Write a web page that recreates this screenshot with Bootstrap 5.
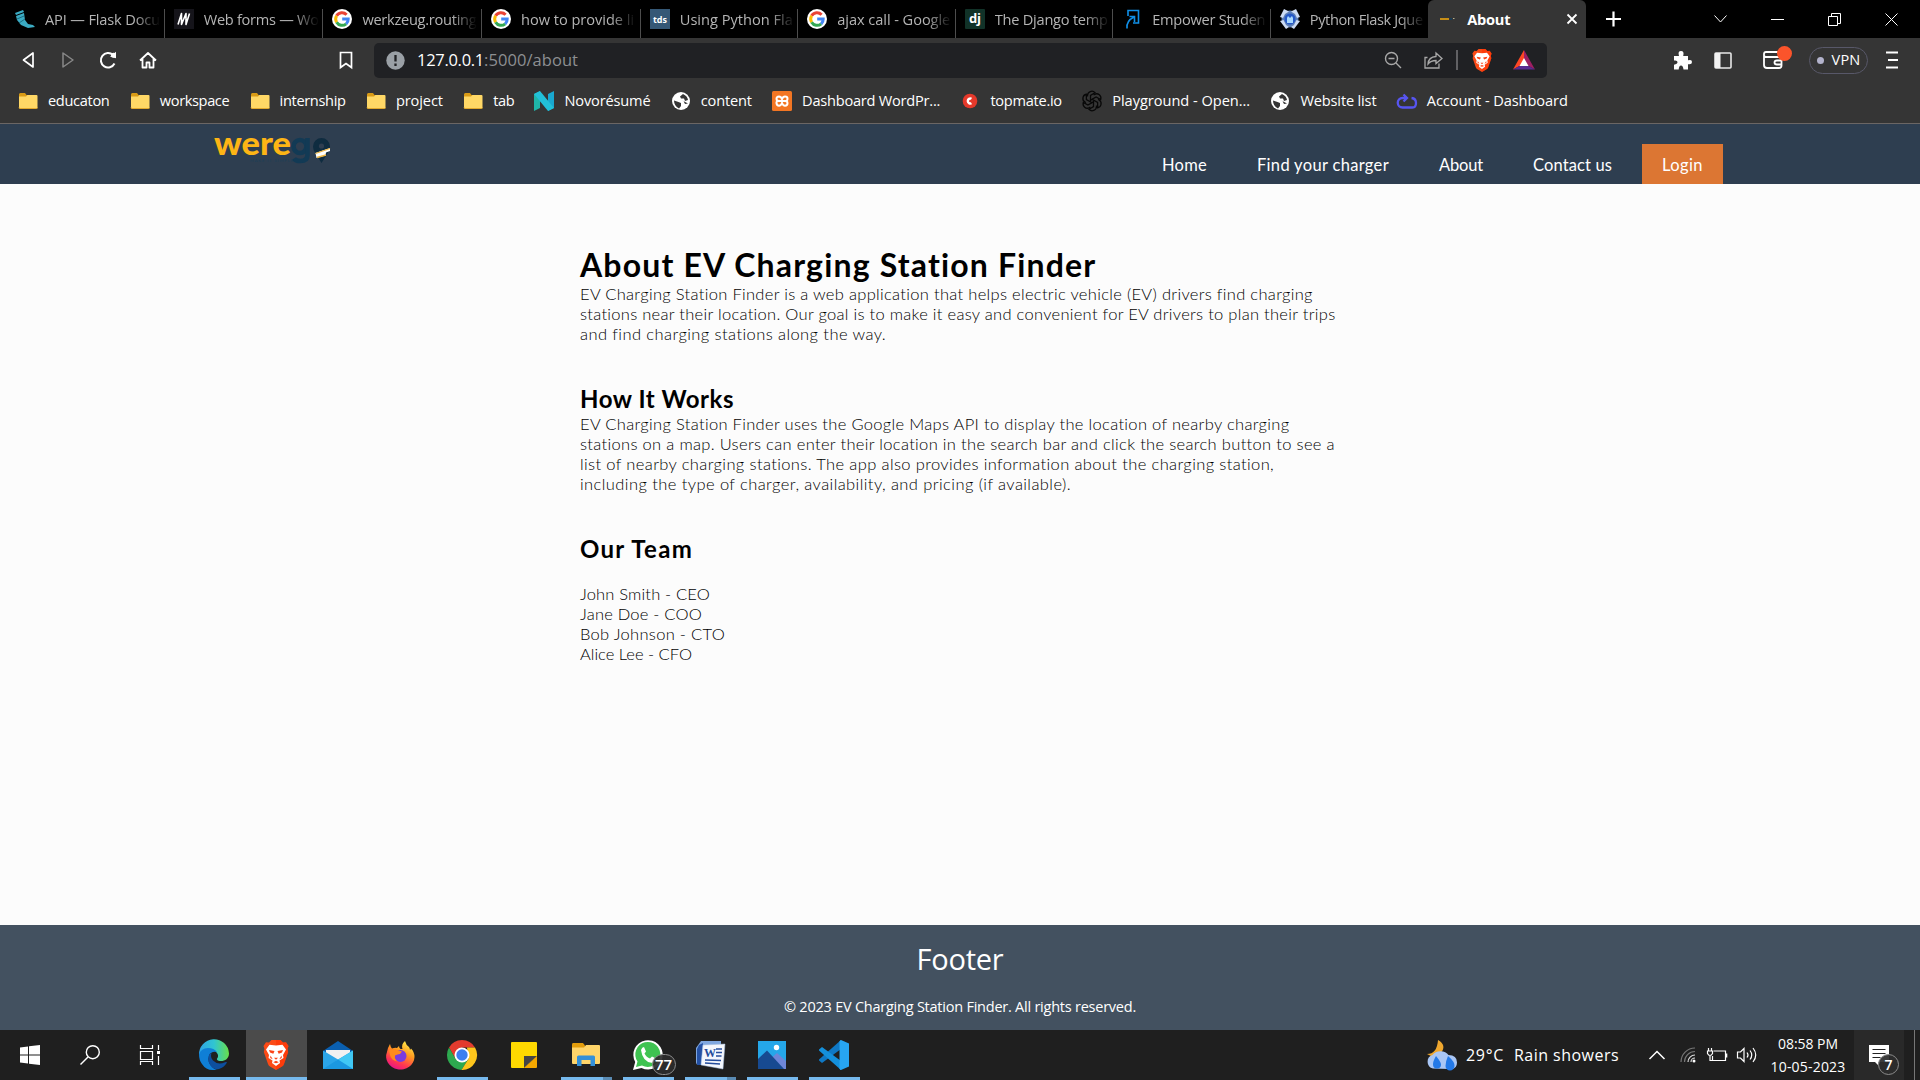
<!DOCTYPE html>
<html lang="en">
<head>
<meta charset="utf-8">
<meta name="viewport" content="width=device-width, initial-scale=1">
<title>About</title>
<link href="https://cdn.jsdelivr.net/npm/bootstrap@5.3.0/dist/css/bootstrap.min.css" rel="stylesheet">
<style>
  html, body { height: 100%; }
  body { font-family: "Open Sans", "Noto Sans", sans-serif; background: #fcfcfc; color: #000; overflow: hidden; line-height: 20px; }
  svg { display: block; flex: none; overflow: visible; }
  [data-w] { display: inline-block; white-space: nowrap; }

  /* browser chrome */
  .tabstrip { height: 38px; background: #000; font-size: 14.6px; color: #b4b4b4; }
  .tabstrip > .lead-gap { width: 6px; flex: none; }
  .btab { width: 157.500px; height: 38px; padding: 0 0 0 9px; gap: 10px; flex: none; }
  .btab.wide { width: 158.700px; }
  .btab.sep { background: linear-gradient(#4d4d4d, #4d4d4d) 100% 9px / 1px 29px no-repeat; }
  .btab .ttl { width: 115px; overflow: hidden; -webkit-mask-image: linear-gradient(90deg, #000 78%, transparent 100%); mask-image: linear-gradient(90deg, #000 78%, transparent 100%); }
  .btab.current { width: 158px; background: #353535; border-radius: 6px 6px 0 0; color: #fff; font-weight: 700; }
  .btab svg + .ttl, .btab svg + span { margin-top: -1px; }
  .winctl { gap: 44px; padding-right: 22.500px; }
  .toolbar { height: 44px; background: #353535; }
  .navicons { width: 374px; padding: 0 21px 0 22px; }
  .urlbar { width: 1173px; height: 35px; border-radius: 5px; background: #202124; padding: 0 12px; font-size: 16.500px; color: #8d8f92; }
  .ico-fwd { margin-left: 26.500px; }
  .ico-reload { margin-left: 24px; }
  .ico-home { margin-left: 22px; }
  .ico-share { margin-left: 22px; }
  .ico-bar { margin-left: 13px; }
  .ico-lion { margin-left: 14px; }
  .ico-bat { margin-left: 21px; }
  .tools { padding-right: 22px; }
  .tools .side { margin-left: 22px; }
  .tools .wallet { margin-left: 31px; }
  .tools .burger { margin-left: 18px; }
  .vpn { width: 59px; height: 27px; border: 1px solid #585869; border-radius: 14px; color: #fff; font-size: 14.500px; gap: 8px; margin-left: 26px; }
  .vpn i { width: 7px; height: 7px; border-radius: 50%; background: #b3b3cc; }
  .wallet-dot { position: absolute; width: 15px; height: 15px; right: -9px; top: -5px; border-radius: 50%; background: #fb542b; }
  .bookmarks { height: 42px; background: #353535; border-bottom: 1px solid #6b6664; font-size: 14.6px; color: #fff; padding: 0 0 3px 18px; gap: 20.300px; }
  .bookmarks > div { gap: 10px; }
  .bookmarks span { margin-top: -2px; }

  /* page */
  .sitehead { height: 60px; background: #2e3e50; padding: 0 197px 0 214px; }
  .sitenav { font-family: Lato, sans-serif; font-size: 16.5px; color: #fff; gap: 50px; }
  .sitenav a { color: #fff; text-decoration: none; line-height: 40px; height: 40px; padding-top: 1px; }
  .sitenav .login { background: #dc7633; width: 81px; margin-left: -20px; text-align: center; }
  .about { width: 760px; margin-left: 580px; height: 741px; padding-top: 61px; font-family: Lato, sans-serif; font-weight: 300; font-size: 16.5px; color: #000; }
  .about h1 { font-size: 32px; font-weight: 700; line-height: 39px; margin: 0; color: #000; }
  .about h2 { font-size: 24px; font-weight: 700; line-height: 30px; margin: 0; color: #000; }
  .about p { margin: 0; }
  .about section + section { margin-top: 40px; }
  .about ul { padding-top: 20px; }
  .sitefoot { height: 105px; background: #435160; color: #fff; }
  .sitefoot h3 { font-size: 29px; line-height: 34px; font-weight: 400; padding-top: 17px; margin: 0; }
  .sitefoot p { font-size: 14.5px; margin: 21px 0 0; }

  /* taskbar */
  .taskbar { height: 50px; background: #1f1f1f; color: #fff; }
  .sys { width: 60px; height: 50px; }
  .sys-end { width: 3px; }
  .app { width: 51px; height: 50px; margin: 0 5.5px; border-bottom: 3px solid #76b9ed; padding-top: 3px; position: relative; }
  .app.idle { border-color: transparent; }
  .app.front { width: 61px; margin: 0 .5px; background: #4b4b4b; }
  .app.multi { border-image: linear-gradient(90deg, #76b9ed 79%, #5a8bb3 79%) 3; }
  .count { position: absolute; border: 1px solid #8b8b8b; border-radius: 12px; background: rgba(45,45,45,.92); text-align: center; color: #fff; font-weight: 600; }
  .c77 { width: 24px; height: 21px; left: 29px; top: 24px; font-size: 15px; line-height: 19px; }
  .c7 { width: 21px; height: 21px; left: 24px; top: 24px; font-size: 14px; line-height: 19px; }
  .weather { font-size: 16px; }
  .weather .temp { margin-left: 9px; }
  .weather .sky { margin-left: 10px; }
  .tray-up { margin-left: 30px; }
  .tray-wifi { margin-left: 15px; }
  .tray-bat { margin-left: 11px; }
  .tray-vol { margin-left: 10px; }
  .clock { width: 92px; font-size: 14px; line-height: 23px; margin-left: 5px; }
  .notif { width: 50px; height: 50px; background: #292929; position: relative; padding: 15px; }
  .peek { width: 1px; height: 50px; background: #777; margin: 0 5px 0 10px; }
</style>
</head>
<body class="d-flex flex-column">

<svg width="0" height="0" class="position-absolute">
  <defs>
    <symbol id="google" viewBox="0 0 20 20"><circle cx="10" cy="10" r="10" fill="#fff"/><g fill="none" stroke-width="3"><path d="M14.6 5.7A6.3 6.3 0 0 0 4.6 6.8" stroke="#ea4335"/><path d="M4.6 6.8a6.3 6.3 0 0 0 0 6.4" stroke="#fbbc05"/><path d="M4.6 13.2a6.3 6.3 0 0 0 9.6 1.6" stroke="#34a853"/><path d="M14.2 14.8A6.3 6.3 0 0 0 16.2 10H10.2" stroke="#4285f4"/></g></symbol>
    <symbol id="folder" viewBox="0 0 20 20"><path d="M1 3.5Q1 2 2.3 2H7l1.500 2H18v4H1z" fill="#d99b16"/><path d="M1 5.500h7L9.500 4H18.500q1 0 1 1V16.500q0 1-1 1H2q-1 0-1-1z" fill="#ffd866"/><path d="M1 16.500q0 1 1 1h16.500q1 0 1-1" stroke="#e2a92d" fill="none"/></symbol>
    <symbol id="globe" viewBox="0 0 20 20"><circle cx="10" cy="10" r="9" fill="#fff"/><path d="M3 9.500l4.500 1.500 2.500 1v3l-2 2.500Q3 15 3 9.500zM12 3l-3 2.500 1 2h3l1 2.500 3-1Q16.500 5 12 3zM9.500 8.500l3 1.500 1.500 3 3-.500" fill="#353535"/></symbol>
    <symbol id="lion" viewBox="0 0 26 30"><path d="M6 2.500L8.500 0h9L20 2.500l3-.200L25.500 6l-1 3 .700 3L21 24q-.500 1.500-2 2.500L13 30l-6-3.500Q5.500 25.500 5 24L.800 12l.700-3-1-3L3 2.300z" fill="#fb4a16"/><path d="M13 0h4.500L20 2.500l3-.200L25.500 6l-1 3 .700 3L21 24q-.500 1.500-2 2.500L13 30z" fill="#ff2e00" opacity=".5"/><path d="M6.500 4.800l6.500.700 6.500-.700L23 9.500l-3 5.500.500 3-4 2.500.500 2.500-4 3-4-3 .500-2.500-4-2.500L6 15 3 9.500z" fill="#fff"/><path d="M6 10l5.500 1-1.200 2.800L7 12.500zM20 10l-5.500 1 1.200 2.800 3.300-1.300z" fill="#fb4216"/><path d="M11 17.800h4L13 19.800zM7.500 15.500l2.200 3.800-2.500-1.300zM18.500 15.500l-2.200 3.800 2.500-1.300zM10.200 22.200L13 20.800l2.800 1.400L13 23.200z" fill="#fb4216"/></symbol>
  </defs>
</svg>

<header class="flex-shrink-0">
  <div class="tabstrip d-flex align-items-center">
    <span class="lead-gap"></span>
    <div class="btab wide sep d-flex align-items-center">
      <svg width="20" height="20" viewBox="0 0 20 20"><path d="M0 4l8-3 1 2-8 3zM1 7l8-3 1 7 3 4 5 1 2 2-7 1-7-3-4-5z" fill="#3babc3"/><path d="M2 10l7-3M4 14l6-4" stroke="#1b6c80"/></svg>
      <div class="ttl"><span data-w="115">API — Flask Docu</span></div>
    </div>
    <div class="btab wide sep d-flex align-items-center">
      <svg width="20" height="20" viewBox="0 0 20 20"><rect width="20" height="20" fill="#15141a"/><path d="M4 15.500L7.500 4.500V15.500L12 4.500V15.500L15.500 4.500" fill="none" stroke="#fff" stroke-width="1.600" stroke-linejoin="round"/></svg>
      <div class="ttl"><span data-w="115">Web forms — Wo</span></div>
    </div>
    <div class="btab wide sep d-flex align-items-center"><svg width="20" height="20"><use href="#google"/></svg><div class="ttl"><span data-w="114">werkzeug.routing</span></div></div>
    <div class="btab wide sep d-flex align-items-center"><svg width="20" height="20"><use href="#google"/></svg><div class="ttl"><span data-w="113">how to provide li</span></div></div>
    <div class="btab sep d-flex align-items-center">
      <svg width="20" height="20" viewBox="0 0 20 20"><rect width="20" height="20" fill="#355876"/><text x="10" y="13.500" text-anchor="middle" font-size="9" font-weight="700" fill="#fff">tds</text></svg>
      <div class="ttl"><span data-w="113">Using Python Fla</span></div>
    </div>
    <div class="btab sep d-flex align-items-center"><svg width="20" height="20"><use href="#google"/></svg><div class="ttl"><span data-w="113">ajax call - Google</span></div></div>
    <div class="btab sep d-flex align-items-center">
      <svg width="20" height="20" viewBox="0 0 20 20"><rect width="20" height="20" rx="1" fill="#113228"/><text x="10" y="14" text-anchor="middle" font-size="13" font-weight="700" fill="#fff">dj</text></svg>
      <div class="ttl"><span data-w="113">The Django temp</span></div>
    </div>
    <div class="btab sep d-flex align-items-center">
      <svg width="20" height="20" viewBox="0 0 20 20"><path d="M6 7V1.500h10.500V14H11M5 19.500Q4 12 12 8M7.500 7.500H12.500V13" fill="none" stroke="#1090e8" stroke-width="1.600"/></svg>
      <div class="ttl"><span data-w="113">Empower Studen</span></div>
    </div>
    <div class="btab d-flex align-items-center">
      <svg width="20" height="20" viewBox="0 0 20 20"><circle cx="10" cy="10" r="8.500" fill="#5d7fb8"/><path d="M4 0l5 2.500-4 2.500L3 9 0 8zM16 0l-5 2.500 4 2.500 2 4 3-1zM0 12l3.500-1L6 16l3 2-3 2zM20 12l-3.500-1L14 16l-3 2 3 2z" fill="#cddbf3"/><circle cx="10" cy="10" r="5.500" fill="#2458c8"/><path d="M7 14V9l1-2 2 2 2-2 1 2v5z" fill="#a8d8ff"/></svg>
      <div class="ttl"><span data-w="113">Python Flask Jque</span></div>
    </div>
    <div class="btab current d-flex align-items-center">
      <svg width="20" height="20" viewBox="0 0 20 20"><path d="M3 9h9v2H3z" fill="#c68e17"/><path d="M13 9h2v2h-2z" fill="#183c55"/><path d="M16 9h1.500v1H16z" fill="#b9b08c"/></svg>
      <span data-w="43">About</span>
      <svg class="ms-auto me-2" width="12" height="12" viewBox="0 0 12 12"><path d="M1.500 1.500l9 9m0-9l-9 9" stroke="#fff" stroke-width="1.800"/></svg>
    </div>
    <svg class="ms-3" width="22" height="20" viewBox="0 0 22 20"><path d="M11.500 2.500v15M4 10h15" stroke="#fff" stroke-width="2.200"/></svg>
    <div class="winctl ms-auto d-flex align-items-center">
      <svg width="13" height="8" viewBox="0 0 13 8" fill="none" stroke="#fff"><path d="M.500.500l6 6.500 6-6.500"/></svg>
      <svg width="13" height="13" viewBox="0 0 13 13"><path d="M0 6.500h13" stroke="#fff"/></svg>
      <svg width="13" height="13" viewBox="0 0 13 13" fill="none" stroke="#fff"><path d="M.500 3.500h9v9h-9zM3.500 3V.500h9v10H10"/></svg>
      <svg width="13" height="13" viewBox="0 0 13 13"><path d="M.500.500l12 12m0-12l-12 12" stroke="#fff"/></svg>
    </div>
  </div>

  <div class="toolbar d-flex align-items-center">
    <div class="navicons d-flex align-items-center">
      <svg width="13" height="18" viewBox="0 0 13 18"><path d="M11 2v14L1.500 9z" fill="none" stroke="#fff" stroke-width="1.700" stroke-linejoin="round"/></svg>
      <svg class="ico-fwd" width="13" height="18" viewBox="0 0 13 18"><path d="M1 2v14L11 9z" fill="none" stroke="#888" stroke-width="1.500" stroke-linejoin="round"/></svg>
      <svg class="ico-reload" width="18" height="18" viewBox="0 0 18 18"><path d="M15.500 12.500A7.200 7.200 0 1 1 14 4" fill="none" stroke="#fff" stroke-width="2"/><path d="M11 5.500L17 .800v6.400z" fill="#fff"/><circle cx="14.500" cy="4.300" r="2.500" fill="#fff"/></svg>
      <svg class="ico-home" width="18" height="18" viewBox="0 0 18 18"><path d="M1 9.500L9 2l8 7.500M3.500 8v8.500h4v-5h3v5h4V8" fill="none" stroke="#fff" stroke-width="1.800" stroke-linejoin="round"/></svg>
      <svg class="ms-auto" width="14" height="18" viewBox="0 0 14 18"><path d="M1.500 1.500h11V16.500L7 12.500l-5.500 4z" fill="none" stroke="#fff" stroke-width="1.700"/></svg>
    </div>
    <div class="urlbar d-flex align-items-center">
      <svg width="19" height="19" viewBox="0 0 19 19"><circle cx="9.500" cy="9.500" r="9.200" fill="#9aa0a6"/><path d="M9.500 4v6.500M9.500 12.500v2.500" stroke="#202124" stroke-width="2.300"/></svg>
      <span class="ms-2 ps-1"><span data-w="67" class="text-white">127.0.0.1</span><span data-w="94">:5000/about</span></span>
      <div class="ms-auto d-flex align-items-center">
        <svg width="18" height="18" viewBox="0 0 18 18" fill="none" stroke="#a8a8a8" stroke-width="1.400"><circle cx="7.500" cy="7.500" r="6"/><path d="M12 12l5 5M4.500 7.500h6"/></svg>
        <svg class="ico-share" width="19" height="18" viewBox="0 0 19 18" fill="none" stroke="#a8a8a8" stroke-width="1.300"><path d="M3.500 6.500H1V17h14v-4.500M4 13Q4.500 6 12 5.500V2l6 5.500-6 5V9.500Q7 9.500 4 13z"/></svg>
        <svg class="ico-bar" width="2" height="20"><path d="M1 0v20" stroke="#77777a" stroke-width="1.500"/></svg>
        <svg class="ico-lion" width="20" height="23"><use href="#lion"/></svg>
        <svg class="ico-bat" width="22" height="20" viewBox="0 0 22 20"><path d="M11 0L0 19.500l11-6z" fill="#ff4724"/><path d="M11 0l11 19.500-11-6z" fill="#9e1f63"/><path d="M0 19.500h22l-11-6z" fill="#5b2a91"/><path d="M11 8l4.500 8h-9z" fill="#fff"/></svg>
      </div>
    </div>
    <div class="tools ms-auto d-flex align-items-center">
      <svg width="19" height="19" viewBox="0 0 19 19"><path d="M1 5h5Q4.500 0 8 0t2.200 5H15v4.300Q19 8 19 11t-4 2.200V18.500h-4.500Q10 14.500 8 14.500T5.700 18.500H1V13.700Q4.500 13 4.500 11T1 9.500z" fill="#fff"/></svg>
      <svg class="side" width="18" height="17" viewBox="0 0 18 17"><rect x="1" y="1" width="16" height="15" rx="1" fill="none" stroke="#e8e8e8" stroke-width="1.600"/><path d="M1 1h5.500v15H1z" fill="#f2f2f2"/></svg>
      <div class="wallet position-relative"><svg width="20" height="18" viewBox="0 0 20 18" fill="none" stroke="#fff" stroke-width="1.800"><path d="M16 5V3q0-2-2-2H3Q1 1 1 3v11q0 3 3 3h12q2.500 0 2.500-2.500V8q0-2-2-2H3Q1 6 1 4"/><path d="M19 9.500h-5q-2.500 0-2.500 2t2.500 2h5"/></svg><span class="wallet-dot"></span></div>
      <div class="vpn d-flex align-items-center justify-content-center"><i></i><span data-w="29">VPN</span></div>
      <svg class="burger" width="12" height="18" viewBox="0 0 12 18"><path d="M0 1.500h12M2 9h10M0 16.500h12" stroke="#fff" stroke-width="1.900"/></svg>
    </div>
  </div>

  <div class="bookmarks d-flex align-items-center">
    <div class="d-flex align-items-center"><svg width="20" height="20"><use href="#folder"/></svg><span data-w="61.500">educaton</span></div>
    <div class="d-flex align-items-center"><svg width="20" height="20"><use href="#folder"/></svg><span data-w="69.500">workspace</span></div>
    <div class="d-flex align-items-center"><svg width="20" height="20"><use href="#folder"/></svg><span data-w="66">internship</span></div>
    <div class="d-flex align-items-center"><svg width="20" height="20"><use href="#folder"/></svg><span data-w="47">project</span></div>
    <div class="d-flex align-items-center"><svg width="20" height="20"><use href="#folder"/></svg><span data-w="21">tab</span></div>
    <div class="d-flex align-items-center"><svg width="20" height="20" viewBox="0 0 20 20"><path d="M0 3l6-3v17l-6 3z" fill="#1fb5a8"/><path d="M14 3l6-3v17l-6 3z" fill="#19a8d0"/><path d="M0 3l6-3 14 17-6 3z" fill="#22c0d8"/></svg><span data-w="86">Novorésumé</span></div>
    <div class="d-flex align-items-center"><svg width="20" height="20"><use href="#globe"/></svg><span data-w="51">content</span></div>
    <div class="d-flex align-items-center"><svg width="20" height="20" viewBox="0 0 20 20"><rect width="20" height="20" rx="1.500" fill="#f37623"/><path d="M7 5.500q2 0 3 2.600 1-2.600 3-2.600 2.500 0 2.500 2.300T13 10q2.500 0 2.500 2.300T13 14.700q-2 0-3-2.700-1 2.700-3 2.700t-2.500-2.400T7 10h6M7 10Q4.500 10 4.500 7.800T7 5.500" fill="none" stroke="#fff" stroke-width="2"/></svg><span data-w="138">Dashboard WordPr...</span></div>
    <div class="d-flex align-items-center"><svg width="20" height="20" viewBox="0 0 20 20"><circle cx="10" cy="10" r="7.300" fill="#e5392b"/><path d="M11.500 7.800a2.500 2.500 0 1 0 0 4.400" fill="none" stroke="#fff" stroke-width="2.400"/></svg><span data-w="71.500">topmate.io</span></div>
    <div class="d-flex align-items-center"><svg width="20" height="20" viewBox="-10 -10 20 20" fill="none" stroke="#080808" stroke-width="1.300"><g id="petal"><path d="M-4.500-4.500V-5.500a4.300 4.300 0 0 1 7.500-2.800L-1.500-5.600V.800"/></g><use href="#petal" transform="rotate(60)"/><use href="#petal" transform="rotate(120)"/><use href="#petal" transform="rotate(180)"/><use href="#petal" transform="rotate(240)"/><use href="#petal" transform="rotate(300)"/></svg><span data-w="138">Playground - Open...</span></div>
    <div class="d-flex align-items-center"><svg width="20" height="20"><use href="#globe"/></svg><span data-w="76">Website list</span></div>
    <div class="d-flex align-items-center"><svg width="20" height="20" viewBox="0 0 20 20" fill="none" stroke="#5755f0" stroke-width="2.300"><path d="M9 7H5.500a4.700 4.700 0 1 0 0 9.500h10Q19 16.500 19 12t-4.500-5M6.500 3.500L10 7l-3.500 3.500"/></svg><span data-w="141">Account - Dashboard</span></div>
  </div>
</header>

<nav class="sitehead d-flex justify-content-between align-items-end flex-shrink-0">
  <svg class="align-self-start" width="120" height="46" viewBox="0 0 120 46" font-family="Lato, sans-serif" font-weight="900">
    <text x="0" y="31" font-size="33" fill="#fdb515" textLength="77" lengthAdjust="spacingAndGlyphs">were</text>
    <g fill="none" stroke="#123a55" stroke-width="4.600"><circle cx="86" cy="22.500" r="6.500"/><path d="M93.500 14v17q0 6-7 6-5 0-6.500-2.500"/></g>
    <path d="M107.500 14a8.500 8.500 0 0 0-8.500 8.500q0 4 2.500 7l6 9.500 6-9.500q2.500-3 2.500-7a8.500 8.500 0 0 0-8.500-8.500z" fill="#0f2c40"/><circle cx="107.500" cy="22" r="2.600" fill="#2e3e50"/>
    <path d="M101.500 29l14.500-5v3l-4 1.500-.500 3-9 2.500z" fill="#fff"/><path d="M101.500 29.500L116 24.500M103 33.500l9-2.500" stroke="#eeb440" stroke-width="1.300"/>
    <text x="36" y="38" font-size="4" font-weight="400" fill="#1c3e58" textLength="43">MAKE IT SIMPLE</text>
  </svg>
  <div class="sitenav d-flex">
    <a href="#"><span data-w="45">Home</span></a>
    <a href="#"><span data-w="132">Find your charger</span></a>
    <a href="#"><span data-w="44">About</span></a>
    <a href="#"><span data-w="79">Contact us</span></a>
    <a href="#" class="login"><span data-w="41">Login</span></a>
  </div>
</nav>

<main class="about flex-shrink-0">
  <section>
    <h1><span data-w="517">About EV Charging Station Finder</span></h1>
    <p><span data-w="733">EV Charging Station Finder is a web application that helps electric vehicle (EV) drivers find charging</span><br><span data-w="756">stations near their location. Our goal is to make it easy and convenient for EV drivers to plan their trips</span><br><span data-w="306">and find charging stations along the way.</span></p>
  </section>
  <section>
    <h2><span data-w="154">How It Works</span></h2>
    <p><span data-w="710">EV Charging Station Finder uses the Google Maps API to display the location of nearby charging</span><br><span data-w="755">stations on a map. Users can enter their location in the search bar and click the search button to see a</span><br><span data-w="695">list of nearby charging stations. The app also provides information about the charging station,</span><br><span data-w="491">including the type of charger, availability, and pricing (if available).</span></p>
  </section>
  <section>
    <h2><span data-w="113">Our Team</span></h2>
    <ul class="list-unstyled mb-0">
      <li><span data-w="130">John Smith - CEO</span></li>
      <li><span data-w="122">Jane Doe - COO</span></li>
      <li><span data-w="145">Bob Johnson - CTO</span></li>
      <li><span data-w="112">Alice Lee - CFO</span></li>
    </ul>
  </section>
</main>

<footer class="sitefoot text-center flex-shrink-0">
  <h3><span data-w="87">Footer</span></h3>
  <p><span data-w="352">© 2023 EV Charging Station Finder. All rights reserved.</span></p>
</footer>

<div class="taskbar d-flex align-items-center flex-shrink-0">
  <div class="sys d-flex align-items-center justify-content-center"><svg width="20" height="20" viewBox="0 0 20 20"><path d="M0 2.500L8 1.400V9.500H0zM9 1.200L20 0v9.500H9zM0 10.500h8v8L0 17.500zM9 10.500h11V20L9 18.700z" fill="#fff"/></svg></div>
  <div class="sys d-flex align-items-center justify-content-center"><svg width="20" height="20" viewBox="0 0 20 20"><circle cx="12.800" cy="7.200" r="6.500" fill="none" stroke="#fff" stroke-width="1.400"/><path d="M8 12L.500 19.500" stroke="#fff" stroke-width="1.400"/></svg></div>
  <div class="sys d-flex align-items-center justify-content-center"><svg width="20" height="20" viewBox="0 0 20 20" fill="none" stroke="#fff" stroke-width="1.200"><path d="M.500 0v3.500h12V0M.500 6.500h12v8H.500zM.500 20v-3.500h12V20M18.500 0v5M18.500 11v9"/><path d="M17 6h3v3h-3z" fill="#fff" stroke="none"/></svg></div>
  <span class="sys-end"></span>
  <div class="app d-flex align-items-center justify-content-center"><svg width="30" height="30" viewBox="0 0 30 30"><defs><linearGradient id="e1"><stop offset="0" stop-color="#2fa4e6"/><stop offset=".5" stop-color="#30c5d2"/><stop offset="1" stop-color="#68e04a"/></linearGradient></defs><path d="M0 15a15 15 0 0 1 30-1.500c0 5-4 7.500-8 7.500-3.500 0-5-1.500-3.500-3 2-3-1-8-7-8S1 13 0 15z" fill="url(#e1)"/><path d="M0 14.500Q2 8 9 8q6 0 9 4-6-1-8 3.500-2 7 3.500 11.500Q15 29.500 18 29.500 8 32 3 24 0 20 0 14.500z" fill="#0f7fd6"/><path d="M10.500 14Q7 21 13 27.500q3 2.500 7 1.500 5-1.500 8-6.500-.500-1-2-.300Q19 25.500 14 20.500 11 17 12.500 13.300z" fill="#0d4f9e"/></svg></div>
  <div class="app front d-flex align-items-center justify-content-center"><svg width="26" height="30"><use href="#lion"/></svg></div>
  <div class="app idle d-flex align-items-center justify-content-center"><svg width="30" height="28" viewBox="0 0 30 28"><path d="M0 10L15 0l15 10v5H0z" fill="#0a5fb0"/><path d="M3 9h24v10H3z" fill="#f1f1f1"/><path d="M0 9.500L15 18.500 30 9.500V28H0z" fill="#2ba5e8"/><path d="M30 9.500L13 20 30 28z" fill="#40c8f4"/><path d="M0 28L15 18.500 30 28z" fill="#1b98e0"/></svg></div>
  <div class="app idle d-flex align-items-center justify-content-center"><svg width="29" height="29" viewBox="0 0 29 29"><defs><linearGradient id="ff" x1=".8" y1="0" x2=".3" y2="1"><stop offset="0" stop-color="#fff44f"/><stop offset=".4" stop-color="#ff9a1f"/><stop offset=".75" stop-color="#ff3750"/><stop offset="1" stop-color="#e5128a"/></linearGradient></defs><path d="M1 11Q2 6 4 3q.500 3 2 4.500Q9 6.500 11 7l2-2q0 2 1.500 3h2Q15 3 19 0q1 4 4 6 1 1.500 1 3l1-1.500Q28.500 11 28.500 16a14.200 13 0 1 1-27.500-5z" fill="url(#ff)"/><circle cx="14.500" cy="15" r="6" fill="#7a3be0"/><path d="M3 9q4-2 8 0l5 1.500q-1 2.500-4.500 3L9 14.500q-1 4 3 6-7-1-8-6.500z" fill="#ff8a1c"/></svg></div>
  <div class="app d-flex align-items-center justify-content-center"><svg width="30" height="30" viewBox="0 0 30 30"><path d="M2 7.500a15 15 0 0 1 26 0H15L8.500 19z" fill="#e33b2e"/><path d="M2 7.500A15 15 0 0 0 14.500 30L21.500 18.700 8.500 18.700z" fill="#2da94f"/><path d="M28 7.500A15 15 0 0 1 14.500 30L21.500 18.700 20 7.500z" fill="#fdc51c"/><circle cx="15" cy="15" r="7.500" fill="#fff"/><circle cx="15" cy="15" r="5.700" fill="#3c7ff0"/></svg></div>
  <div class="app idle d-flex align-items-center justify-content-center"><svg width="26" height="26" viewBox="0 0 26 26"><path d="M1 0h24q1 0 1 1v13L13 26H1q-1 0-1-1V1q0-1 1-1z" fill="#ffd900"/><path d="M13 26V14h13z" fill="#454545"/><path d="M13 26L26 14v11q0 1-1 1z" fill="#f5a800"/></svg></div>
  <div class="app multi d-flex align-items-center justify-content-center"><svg width="28" height="24" viewBox="0 0 28 24"><path d="M0 1.500Q0 0 1 0h10l2 2.500V6H0z" fill="#e39d0c"/><path d="M0 4.500h12L14 2h13q1 0 1 1v17q0 1-1 1H1q-1 0-1-1z" fill="#ffd56a"/><path d="M5 23v-9q0-1.500 1.500-1.500h15Q23 12.500 23 14v9h-4.500v-6h-9v6z" fill="#3490d8"/></svg></div>
  <div class="app d-flex align-items-center justify-content-center"><svg width="30" height="30" viewBox="0 0 30 30"><path d="M0 30L2.200 22A14.700 14.700 0 1 1 8.500 28z" fill="#fff"/><path d="M3 27l1.500-5.500A12.500 12.500 0 1 1 9 25.500z" fill="#3fc351"/><path d="M8 10q1-3 3-3l2 4.500-1.500 2q2 4 5.500 5l2-2 4.500 2.300q-.500 4-5 4Q9.500 21.500 8 10z" fill="#fff"/></svg><span class="count c77">77</span></div>
  <div class="app multi d-flex align-items-center justify-content-center"><svg width="29" height="28" viewBox="0 0 29 28"><path d="M5 0h20v24H3q-3 0-3-3V7z" fill="#7fa7e0"/><path d="M3 4l4-2-2 22H1V8z" fill="#2451a5"/><path d="M7 4l22-1-2 25L5 24z" fill="#f4f7fd" stroke="#a5bddd" stroke-width=".5"/><text x="8" y="16" font-size="12" font-weight="700" fill="#244c9c" font-family="Liberation Serif, serif">W</text><path d="M20 8h6M20 11.500h6M20 15h5.500M9 19l16 .500M9 22l15 1" stroke="#244c9c" stroke-width="1.600"/></svg></div>
  <div class="app d-flex align-items-center justify-content-center"><svg width="28" height="28" viewBox="0 0 28 28"><path d="M0 0h28v28H0z" fill="#25a7e9"/><path d="M10 28V20l9-8 9 8v8z" fill="#6e86d8"/><path d="M0 18L9 9.500 26 28H0z" fill="#174a91"/><circle cx="18.500" cy="6.500" r="2.700" fill="#fff"/></svg></div>
  <div class="app d-flex align-items-center justify-content-center"><svg width="30" height="30" viewBox="0 0 30 30"><path d="M22 9L3 23 0 20.500v-1L22 0z" fill="#0f78c4"/><path d="M22 21L3 7 0 9.500v1L22 30z" fill="#1490dc"/><path d="M22 0l8 3.500v23L22 30q-1 0-1.500-1.500V1.500Q21 0 22 0z" fill="#27a5f2"/></svg></div>

  <div class="weather ms-auto d-flex align-items-center">
    <svg width="31" height="31" viewBox="0 0 31 31"><path d="M12 0q9 5 3 13L9 18 1 14q10 0 11-14z" fill="#efa72e"/><path d="M7 28.500a7 7 0 0 1-.5-13.500 9 7 0 0 1 16 0Q31 15 31 22.500T23 29z" fill="#a9c6f5"/><path d="M10 16q5 6 5 8.500a4 4 0 0 1-8 0Q7 21 10 16zM22 16q7 6 6.500 10a4.500 4.500 0 0 1-9 0Q20 20 22 16z" fill="#2379e8"/></svg>
    <span class="temp" data-w="38">29°C</span><span class="sky" data-w="105">Rain showers</span>
  </div>
  <div class="d-flex align-items-center">
    <svg class="tray-up" width="16" height="10" viewBox="0 0 16 10"><path d="M.500 9L8 1.500 15.500 9" fill="none" stroke="#fff" stroke-width="1.500"/></svg>
    <svg class="tray-wifi" width="16" height="16" viewBox="0 0 16 16" fill="none" stroke-width="1.200"><path d="M1 15A14 14 0 0 1 15 1M4.500 15A10.500 10.500 0 0 1 15 4.500" stroke="#777"/><path d="M8 15a7 7 0 0 1 7-7M11 15a4 4 0 0 1 4-4" stroke="#ddd"/><circle cx="14" cy="14" r="1.500" fill="#fff"/></svg>
    <svg class="tray-bat" width="20" height="14" viewBox="0 0 20 14" fill="none" stroke="#fff" stroke-width="1.200"><path d="M6.500 3h12v9.500H5.500V8M18.500 6h1.200v3.500M1.500 0v3M4.500 0v3M.500 3h5v2.500q-1 2-2.500 2T.500 5.500zM3 7.500v5h3"/></svg>
    <svg class="tray-vol" width="20" height="18" viewBox="0 0 20 18" fill="none" stroke="#fff" stroke-width="1.200"><path d="M.500 6h3L7 2.500v13L3.500 12h-3zM10 6.500q2 2.500 0 5M13 4.500q3.500 4.500 0 9M16 2q5.500 7 0 14"/></svg>
    <div class="clock text-center"><span data-w="60">08:58 PM</span><br><span data-w="75">10-05-2023</span></div>
    <div class="notif"><svg width="20" height="20" viewBox="0 0 20 20"><path d="M0 0h20v17H9.500v3.500L6 17H0z" fill="#fff"/><path d="M3.500 4.500h13M3.500 8.500h13M3.500 12.500h8" stroke="#222" stroke-width="1.200"/></svg><span class="count c7">7</span></div>
    <span class="peek"></span>
  </div>
</div>

<script src="https://cdn.jsdelivr.net/npm/bootstrap@5.3.0/dist/js/bootstrap.bundle.min.js"></script>
<script>
  // Track each label so that it fills the measure given in data-w.
  document.querySelectorAll('[data-w]').forEach(function (el) {
    var gap = parseFloat(el.dataset.w) - el.getBoundingClientRect().width;
    el.style.letterSpacing = (gap / el.textContent.length).toFixed(3) + 'px';
  });
</script>
</body>
</html>
